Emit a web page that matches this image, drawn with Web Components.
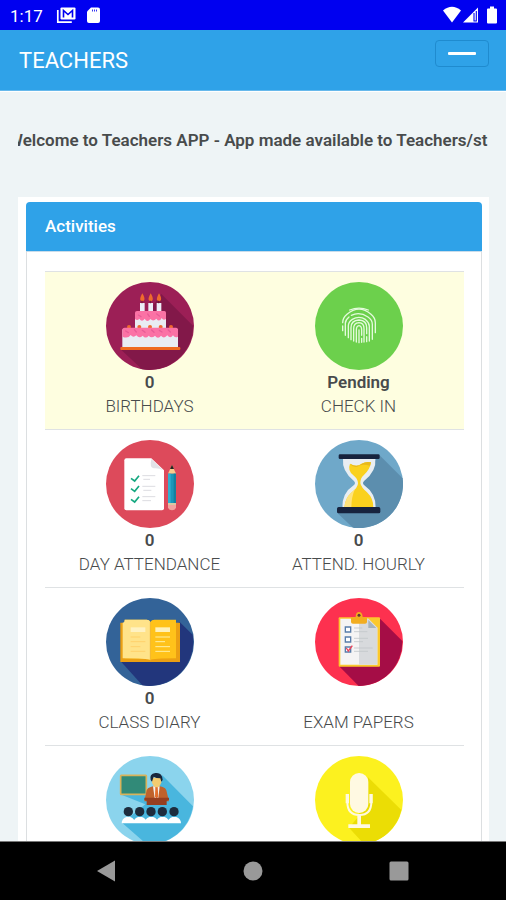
<!DOCTYPE html>
<html lang="en">
<head>
<meta charset="utf-8">
<meta name="viewport" content="width=device-width, initial-scale=1">
<title>Teachers</title>
<style>
  html, body { margin: 0; height: 100%; }
  body { font-family: Roboto, "Liberation Sans", sans-serif; color: #484b4c; background: #eef4f6; }
</style>
</head>
<body>
<teachers-app></teachers-app>

<template id="t-app">
  <style>
    :host { display: flex; flex-direction: column; height: 100vh; overflow: hidden; }
    main { flex: 1; min-height: 0; overflow: hidden; padding: 0 17px 0 18px; }
    .sheet { background: #fff; padding: 5px 7px 0 8px; }
  </style>
  <status-bar time="1:17"></status-bar>
  <app-header>TEACHERS</app-header>
  <main>
    <news-ticker>Welcome to Teachers APP - App made available to Teachers/st</news-ticker>
    <div class="sheet">
      <activity-card heading="Activities">
        <activity-row highlight>
          <activity-tile icon="cake" value="0" label="BIRTHDAYS"></activity-tile>
          <activity-tile icon="finger" value="Pending" label="CHECK IN"></activity-tile>
        </activity-row>
        <activity-row>
          <activity-tile icon="list" value="0" label="DAY ATTENDANCE"></activity-tile>
          <activity-tile icon="hourglass" value="0" label="ATTEND. HOURLY"></activity-tile>
        </activity-row>
        <activity-row>
          <activity-tile icon="book" value="0" label="CLASS DIARY"></activity-tile>
          <activity-tile icon="clipboard" label="EXAM PAPERS"></activity-tile>
        </activity-row>
        <activity-row>
          <activity-tile icon="lecture"></activity-tile>
          <activity-tile icon="mic"></activity-tile>
        </activity-row>
      </activity-card>
    </div>
  </main>
  <system-nav></system-nav>
</template>

<template id="t-status">
  <style>
    :host { display: flex; align-items: center; height: 30px; padding: 0 8px 0 10px; background: #0000f0; color: #fff; font-size: 17px; line-height: 30px; flex: none; }
    .time { padding-top: 2px; }
    .left { margin-left: 13px; flex: 1; height: 30px; }
    svg { display: block; }
  </style>
  <span class="time"></span>
  <svg class="left" width="60" height="30" viewBox="0 0 60 30" preserveAspectRatio="xMinYMid meet" aria-hidden="true">
    <path d="M1.800 10v12.200h14" fill="none" stroke="#fff" stroke-width="1.700"/>
    <rect x="4.500" y="7.400" width="15" height="12" rx="1.200" fill="#fff"/>
    <path d="M7.500 17.500v-7l4.500 4 4.500-4v7" fill="none" stroke="#0000f0" stroke-width="1.600"/>
    <path d="M35 7.500h7q2 0 2 2v11.500q0 2-2 2h-9q-2 0-2-2v-9.500z" fill="#fff"/>
    <path d="M36.500 9.500v2m2-2v2m2-2v2" stroke="#0000f0" stroke-width=".8"/>
  </svg>
  <svg width="55" height="30" viewBox="0 0 55 30" aria-hidden="true">
    <path d="M0 10.500Q9 3 18 10.500L9 22.500Z" fill="#fff"/>
    <path d="M20 22.500L35 7.500v15z" fill="#fff"/>
    <path d="M31 13v8h2.300v-10" fill="none" stroke="#0000f0" stroke-width="1.100"/>
    <path d="M47 6.500h4v2h2q1 0 1 1v13q0 1-1 1h-8q-1 0-1-1v-13q0-1 1-1h2z" fill="#fff"/>
  </svg>
</template>

<template id="t-header">
  <style>
    :host { display: flex; align-items: flex-start; justify-content: space-between; height: 61px; flex: none; box-sizing: border-box; padding: 10px 17px 0 19px; background: #2fa2e8; border-bottom: 1px solid #67b9ec; box-shadow: 0 1px 0 #fff; color: #fff; }
    h1 { margin: 0; font-size: 22px; line-height: 41px; font-weight: 400; }
    button { width: 54px; height: 27px; margin: 0; padding: 0; display: flex; align-items: center; justify-content: center; background: none; border: 1px solid #1f8bcf; border-radius: 4px; }
    i { width: 28px; height: 3px; background: #fff; border-radius: 1px; }
  </style>
  <h1><slot></slot></h1>
  <button type="button" aria-label="Toggle menu"><i></i></button>
</template>

<template id="t-ticker">
  <style>
    :host { display: block; overflow: hidden; white-space: nowrap; text-indent: -10px; padding: 37px 0 44px; font-size: 17px; line-height: 25px; font-weight: 600; }
  </style>
  <slot></slot>
</template>

<template id="t-card">
  <style>
    :host { display: block; border: 1px solid #dcdfe1; border-radius: 5px; }
    h2 { margin: -1px -1px 0; padding: 0 19px; background: #2fa2e8; color: #fff; font-size: 17px; line-height: 49px; font-weight: 500; border-bottom: 1px solid #c9dcea; border-radius: 4px 4px 0 0; }
    .body { padding: 19px 17px 19px 18px; }
  </style>
  <h2></h2>
  <div class="body"><slot></slot></div>
</template>

<template id="t-row">
  <style>
    :host { display: grid; grid-template-columns: 1fr 1fr; border-top: 1px solid #dfe2e4; padding: 10px 1px 11px 0; }
    :host([highlight]) { background: #fefee0; }
  </style>
  <slot></slot>
</template>

<template id="t-tile">
  <style>
    :host { display: block; text-align: center; }
    a { display: flex; flex-direction: column; align-items: center; color: inherit; text-decoration: none; font-size: 17px; line-height: 24px; }
    svg { display: block; width: 88px; height: 88px; }
    b, span { display: block; height: 24px; }
    b { font-weight: 600; }
    span { font-weight: 300; }
  </style>
  <a href="#"><svg aria-hidden="true"></svg><b></b><span></span></a>
</template>

<template id="t-nav">
  <style>
    :host { display: grid; grid-template-columns: repeat(3, 1fr); justify-items: center; align-items: center; height: 58px; flex: none; box-sizing: border-box; background: #000; box-shadow: 0 -1px 0 #777; padding: 0 34px; }
    button { background: none; border: 0; margin: 0; padding: 0; width: 36px; height: 48px; }
    svg { display: block; margin: auto; }
  </style>
  <button type="button" aria-label="Back"><svg width="22" height="22" viewBox="0 0 22 22"><path d="M1 11L19 .5v21z" fill="#999"/></svg></button>
  <button type="button" aria-label="Home"><svg width="22" height="22" viewBox="0 0 22 22"><circle cx="11" cy="11" r="9.500" fill="#999"/></svg></button>
  <button type="button" aria-label="Recent apps"><svg width="22" height="22" viewBox="0 0 22 22"><rect x="1.500" y="1.500" width="19" height="19" rx="1.500" fill="#999"/></svg></button>
</template>

<script>
const icons = {
  cake: ['42 36 264 264', `
    <circle cx="174" cy="168" r="132" fill="#9c1f56"/>
    <path d="M208 72L303 167A132 132 0 0 1 150 298L88 240Z" fill="#821849"/>
    <path d="M144 99h14v30h-14zM169 99h14v30h-14zM194 99h14v30h-14z" fill="#eceef7"/>
    <path d="M151 70q-8 14-6 20 6 8 12 0 2-8-6-20zM176 70q-8 14-6 20 6 8 12 0 2-8-6-20zM201 70q-8 14-6 20 6 8 12 0 2-8-6-20z" fill="#ef6a2c"/>
    <path d="M150 92v8M175 92v8M200 92v8" stroke="#512" stroke-width="2"/>
    <rect x="129" y="130" width="93" height="44" fill="#e9ecf3"/>
    <path d="M129 128q0-5 6-5h82q5 0 5 5v19q-8 6-13-3-7 14-16 2-9 10-18 1-9 12-17-1-8 12-16 0-6 8-13 1z" fill="#fb72a5"/>
    <g fill="#ef6a2c"><circle cx="111" cy="171" r="6"/><circle cx="142" cy="171" r="6"/><circle cx="174" cy="171" r="6"/><circle cx="206" cy="171" r="6"/><circle cx="237" cy="171" r="6"/></g>
    <rect x="91" y="178" width="167" height="53" fill="#e9ecf3"/>
    <path d="M91 180q0-7 7-7h154q6 0 6 7v20q-9 5-15-4-8 12-17 0-10 12-19 1-9 12-18 0-10 10-19 0-9 11-18 0-10 10-19-1-9 9-17-1-8 12-25 5z" fill="#fb72a5"/>
    <path d="M101 183l8 5m18-9l6 7m18-5l8 6m20-7l7 7m16-6l8 5m19-6l6 6M139 135l8 5m20-8l5 7m22-7l8 6" stroke="#e85c97" stroke-width="4" stroke-linecap="round"/>
    <rect x="85" y="231" width="180" height="9" rx="3" fill="#ef6a20"/>`],
  finger: ['42 36 264 264', `
    <circle cx="174" cy="168" r="132" fill="#6cd04c"/>
    <g fill="none" stroke="#e4fbdc" stroke-width="4" stroke-linecap="round">
      <path d="M146 120q28-11 56 0"/>
      <path d="M125 158q0-14 13-25 36-31 72 0 13 11 13 25v30"/>
      <path d="M125 168v14"/>
      <path d="M133 196v-36q0-10 11-19M151 136q25-12 50 5 13 9 13 22v45"/>
      <path d="M142 203v-35q0-12 12-20 21-12 40 1 11 9 11 20v44"/>
      <path d="M150 209v-36q0-22 24-23 23 1 23 23v18M197 200v15"/>
      <path d="M158 213v-37q0-17 16-18 15 1 15 18v40"/>
      <path d="M166 216v-36q0-12 8-13 8 1 8 13v16M182 205v12"/>
      <path d="M174 180v38"/>
    </g>`],
  list: ['42 30 264 264', `
    <circle cx="174" cy="162" r="132" fill="#dd4a5b"/>
    <path d="M103 85h75l38 36v114q0 6-6 6H103q-6 0-6-6V91q0-6 6-6z" fill="#fff"/>
    <path d="M178 87q-6 27 7 28 16-2 28 6z" fill="#e2e2e7"/>
    <g fill="none" stroke="#15a880" stroke-width="5"><path d="M117 145l11 8 13-16M117 176l11 8 13-16M117 208l11 8 13-16"/></g>
    <g stroke="#dcdce1" stroke-width="3"><path d="M151 137h39M154 148h20M151 169h39M154 181h24M151 200h39M151 212h26"/></g>
    <path d="M240 104l-12 27h24z" fill="#f8cb8c"/><path d="M240 104l-6 13h12z" fill="#222"/>
    <path d="M228 131h24v92h-24z" fill="#1c97b9"/><path d="M228 131h8v92h-8z" fill="#30afd0"/><path d="M245 131h7v92h-7z" fill="#14809f"/>
    <path d="M228 222h24v10q-2 9-12 9t-12-9z" fill="#f3a49f"/><path d="M228 219h24v6h-24z" fill="#d9c9a3"/>`],
  hourglass: ['42 30 264 264', `
    <circle cx="174" cy="162" r="132" fill="#6fa8c9"/>
    <path d="M235 75L305 145A132 132 0 0 1 156 293L109 249Z" fill="#5c8eae"/>
    <path d="M126 85h97q4 39-33 67-8 7 0 14 35 25 34 67H124q-1-44 34-67 8-7 0-14-36-28-32-67z" fill="#e9eef2"/>
    <path d="M147 101q20 12 35 0 14-8 28-4-3 22-22 39-10 8-10 24 3 13 20 27 20 19 19 46h-87q2-28 20-44 21-16 21-29-1-15-14-24-18-15-10-35z" fill="#fad11e"/>
    <path d="M147 101q20 12 35 0 14-8 28-4l-3 10q-25-7-38 3-13 4-22-9z" fill="#e7b91e"/>
    <path d="M130 233q2-28 20-44l12-12q-11 24-11 56z" fill="#ffe37b"/>
    <rect x="113" y="73" width="123" height="14" rx="4" fill="#17233e"/><rect x="108" y="231" width="130" height="19" rx="5" fill="#17233e"/>`],
  book: ['42 24 264 264', `
    <circle cx="174" cy="156" r="132" fill="#336398"/>
    <path d="M263 96L302 134A132 132 0 0 1 151 286L86 214Z" fill="#22367c"/>
    <path d="M85 98h179v118H85z" fill="#eb9f13"/>
    <path d="M98 89h66q8 0 11 7 4-7 12-7h65v116q-70 0-77 5-8-5-77-5z" fill="#ffc21a"/>
    <path d="M98 89h66q8 0 11 7v114q-8-5-83-5V98q6 0 6-9z" fill="#ffe38a"/>
    <path d="M175 96v118" stroke="#edab22" stroke-width="2"/>
    <path d="M116 112h44v14h-44z" fill="#fff2c2"/><path d="M190 112h44v14h-44z" fill="#fff1ba"/>
    <g stroke-width="3"><path d="M116 141h29M116 155h44M116 170h29M116 184h44" stroke="#ffd16b"/><path d="M190 141h44M190 155h29M190 170h44M190 184h44" stroke="#fff0a4"/></g>`],
  clipboard: ['42 24 264 264', `
    <circle cx="174" cy="156" r="132" fill="#fd314f"/>
    <path d="M235 84L304 153A132 132 0 0 1 173 288L116 230Z" fill="#a50d46"/>
    <rect x="113" y="82" width="124" height="148" rx="3" fill="#fbc82c"/>
    <path d="M118 86h84l27 27v111H118z" fill="#f5f4f4"/>
    <path d="M174 86h28l27 27v111h-55z" fill="#d8dadd"/>
    <path d="M202 90v24h24z" fill="#a6b3bd"/>
    <path d="M150 81h14q0-15 10-15t11 15h13v15q0 5-6 5h-36q-6 0-6-5V85q0-4 4-4z" fill="#f2ad20"/><circle cx="174" cy="76" r="4.500" fill="#61363a"/>
    <g fill="#fff" stroke="#587dab" stroke-width="4"><path d="M133 111h16v15h-16zM133 141h16v15h-16zM133 171h16v15h-16z"/></g>
    <path d="M136 174l6 9 12-16" fill="none" stroke="#ef4257" stroke-width="4"/>
    <g stroke="#c3c6ca" stroke-width="2.500"><path d="M159 114h25M159 125h40M159 145h42M159 155h27M159 174h56M159 184h42"/></g>`],
  lecture: ['42 33 264 264', `
    <circle cx="174" cy="165" r="132" fill="#8bd4ed"/>
    <path d="M211 91L303 184A132 132 0 0 1 163 297L91 234 160 178 90 150 164 150Z" fill="#49b6de"/>
    <rect x="86" y="91" width="77" height="57" rx="2" fill="#318a78" stroke="#d8b35b" stroke-width="5"/>
    <path d="M157 169l7-33q2-8 12-10l17-5 19 5q9 3 11 10l8 33z" fill="#bf622c"/>
    <path d="M183 124h20l-4 36h-11z" fill="#f5f0eb"/><path d="M190 126h7l2 29-5 5-5-5z" fill="#e36f2e"/>
    <path d="M180 98h28v14q-4 15-14 15t-14-15z" fill="#f3cb70"/>
    <path d="M176 105q-5-18 14-21 21-3 22 21l-4 5-3-10q-13 0-20-5l-5 15z" fill="#17263c"/>
    <path d="M157 158h74v7l-7 2v13h-60v-13l-7-2z" fill="#963f20"/>
    <g fill="#fff"><path d="M89 235q0-14 14-19h12q14 5 14 19zM124 235q0-14 14-19h12q14 5 14 19zM158 235q0-14 14-19h12q14 5 14 19zM192 235q0-14 14-19h12q14 5 14 19zM227 235q0-14 14-19h12q14 5 14 19z"/></g>
    <g fill="#1d2c3d"><circle cx="109" cy="200" r="14"/><circle cx="143" cy="200" r="14"/><circle cx="177" cy="200" r="14"/><circle cx="211" cy="200" r="14"/><circle cx="246" cy="200" r="14"/></g>`],
  mic: ['42 33 264 264', `
    <circle cx="174" cy="165" r="132" fill="#fcf11f"/>
    <path d="M201 97L301 195A132 132 0 0 1 189 297L144 248 172 215Z" fill="#ebdd05"/>
    <rect x="147" y="84" width="55" height="120" rx="27" fill="#fff9e2"/>
    <path d="M139 147v24q0 39 36 39t36-39v-24" fill="none" stroke="#fff9e2" stroke-width="6"/>
    <path d="M134 147h10v28h-10zM205 147h10v28h-10zM169 211h11v27h27v11h-65v-11h27z" fill="#fff9e2"/>`]
};

const define = (name, template, setup) => customElements.define(name, class extends HTMLElement {
  constructor() {
    super();
    this.attachShadow({ mode: 'open' }).append(document.getElementById(template).content.cloneNode(true));
  }
  connectedCallback() { if (setup) setup(this, this.shadowRoot); }
});

define('status-bar', 't-status', (el, root) => { root.querySelector('.time').textContent = el.getAttribute('time'); });
define('app-header', 't-header');
define('news-ticker', 't-ticker');
define('activity-card', 't-card', (el, root) => { root.querySelector('h2').textContent = el.getAttribute('heading'); });
define('activity-row', 't-row');
define('activity-tile', 't-tile', (el, root) => {
  const [box, shapes] = icons[el.getAttribute('icon')];
  const svg = root.querySelector('svg');
  svg.setAttribute('viewBox', box);
  svg.innerHTML = shapes;
  root.querySelector('b').textContent = el.getAttribute('value') || '';
  root.querySelector('span').textContent = el.getAttribute('label') || '';
});
define('system-nav', 't-nav');
define('teachers-app', 't-app');
</script>
</body>
</html>
